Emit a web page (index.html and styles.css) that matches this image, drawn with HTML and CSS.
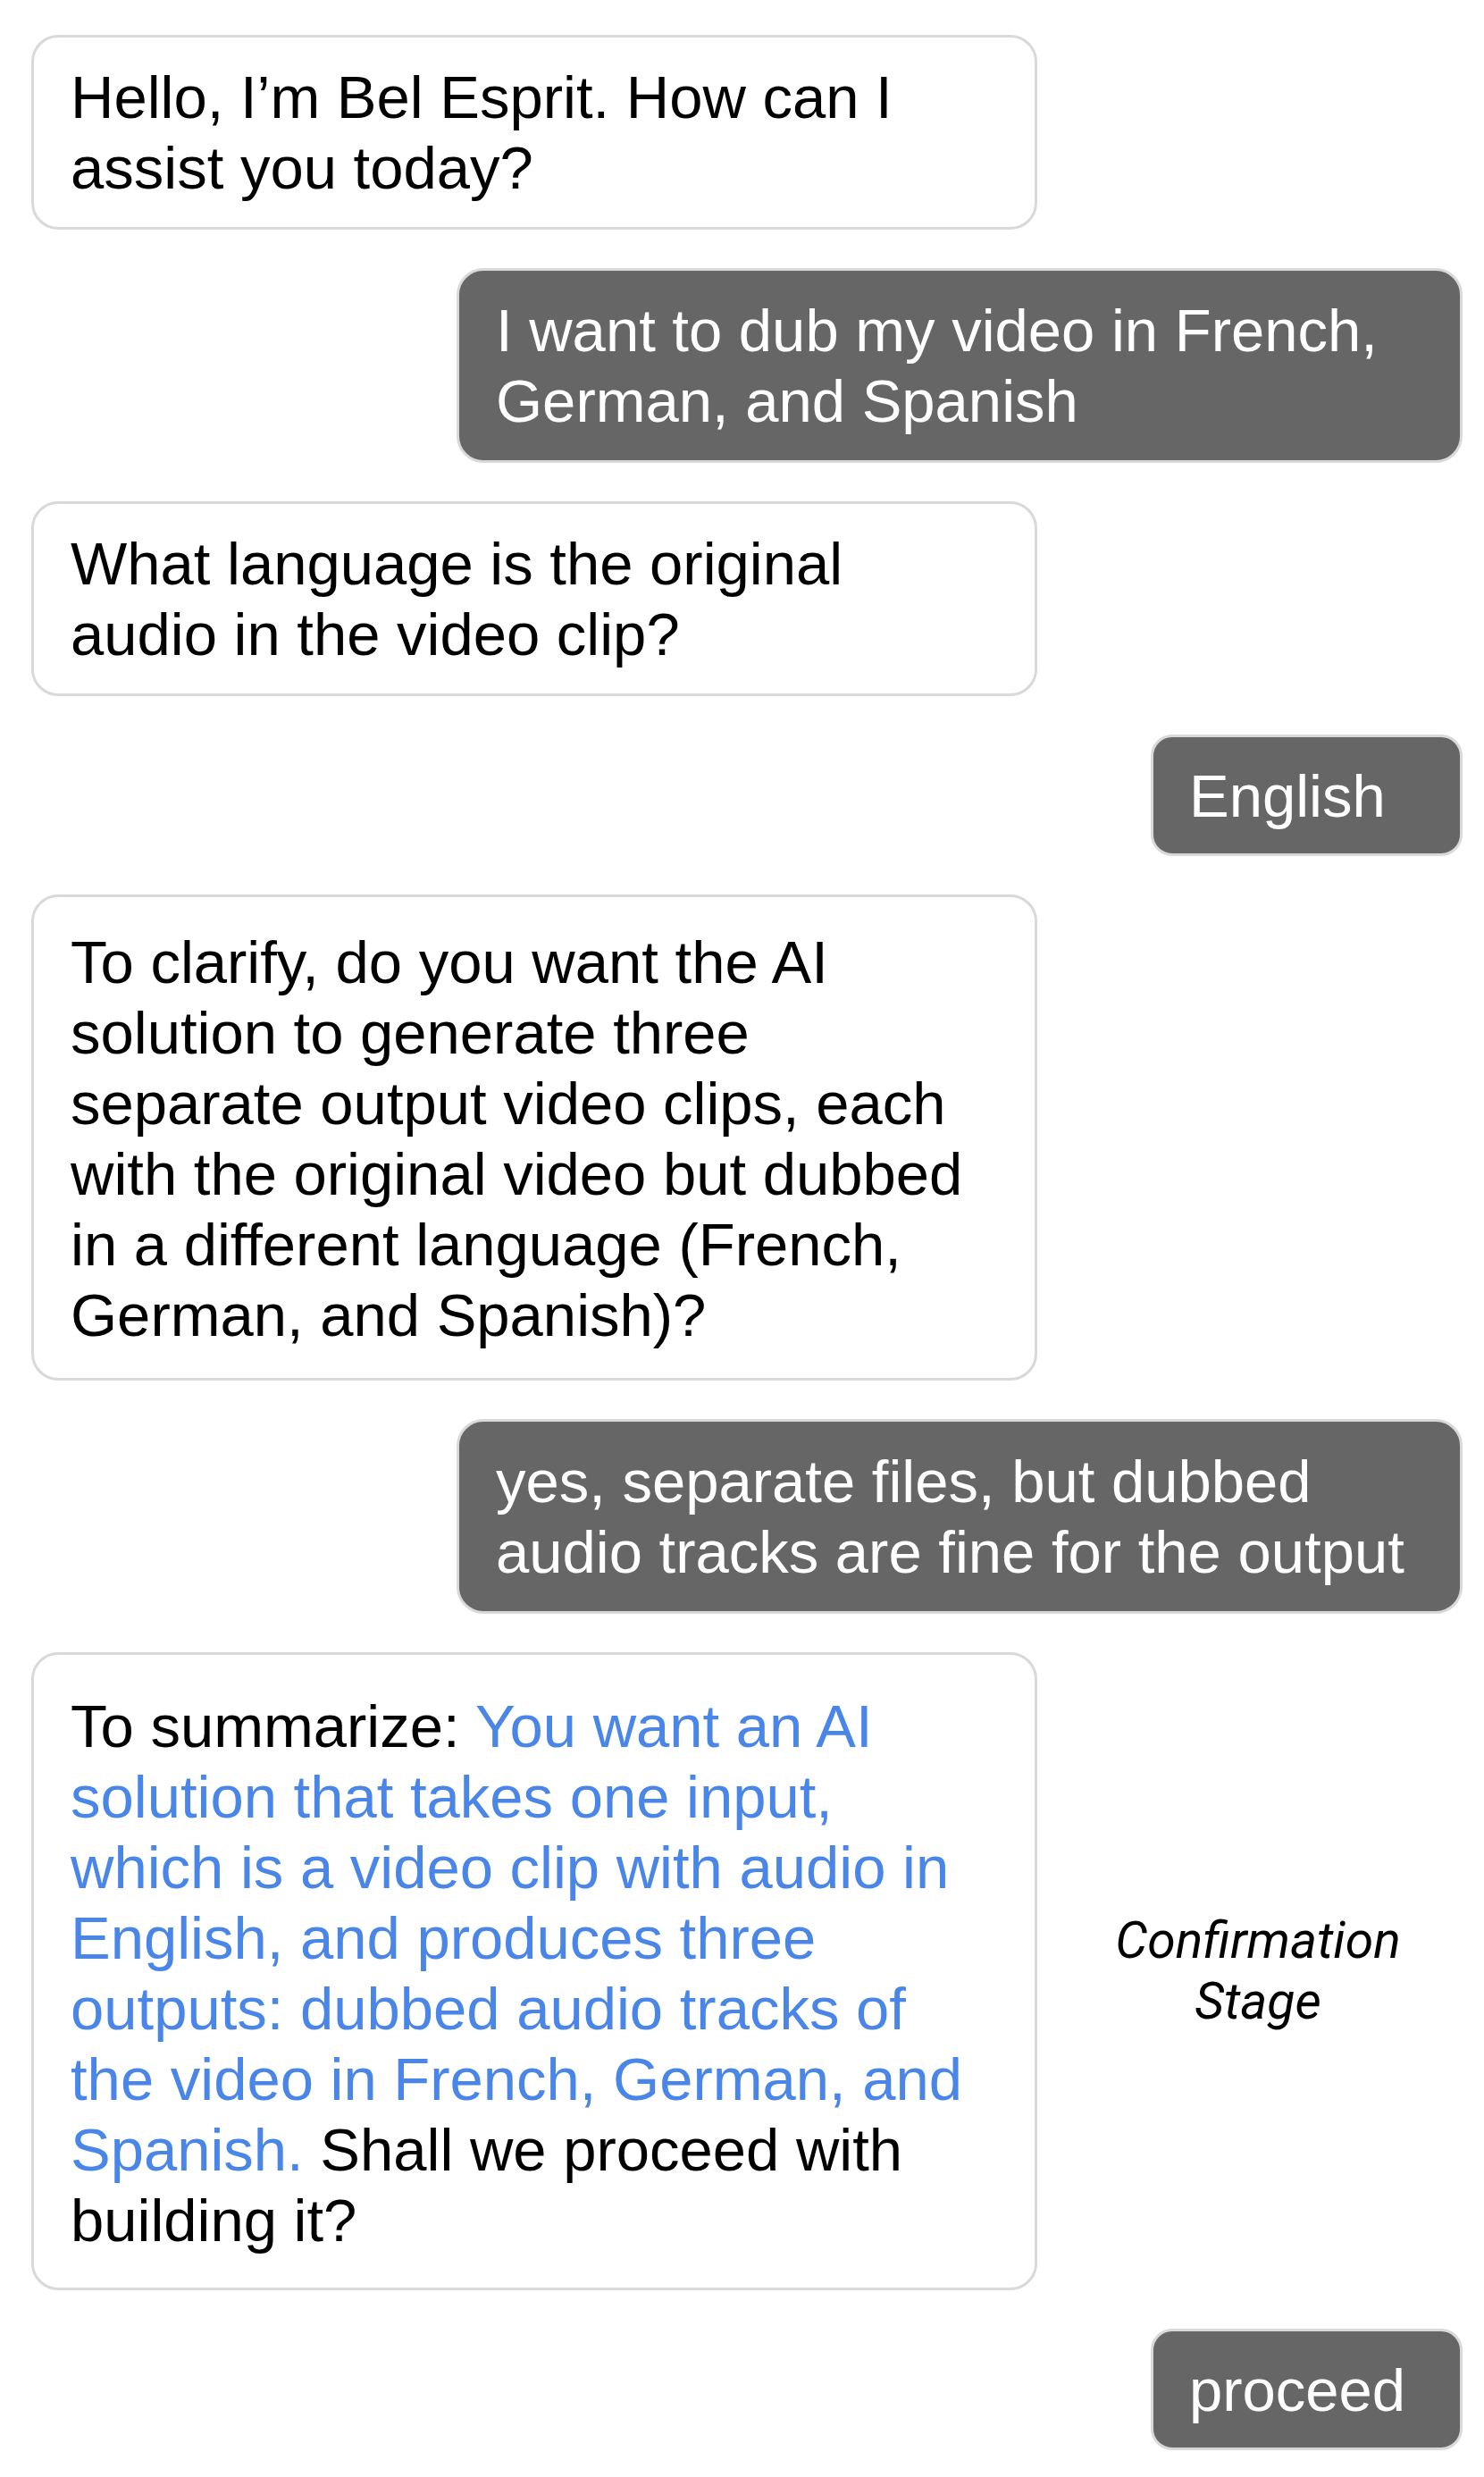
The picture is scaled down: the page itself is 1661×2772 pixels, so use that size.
FILE: index.html
```html
<!DOCTYPE html>
<html>

<head>
  <meta charset="UTF-8">
  <title>Bel Esprit</title>
  <link rel="stylesheet" href="styles.css">
</head>

<body>
  <div class="chat">
    <div class="bubble bot">
      Hello, I’m Bel Esprit. How can I<br>assist you today?
    </div>

    <div class="bubble user">
      I want to dub my video in French,<br>German, and Spanish
    </div>

    <div class="bubble bot">
      What language is the original<br>audio in the video clip?
    </div>

    <div class="bubble user short">English</div>

    <div class="bubble bot clarify">
      To clarify, do you want the AI<br>
      solution to generate three<br>
      separate output video clips, each<br>
      with the original video but dubbed<br>
      in a different language (French,<br>
      German, and Spanish)?
    </div>

    <div class="bubble user">
      yes, separate files, but dubbed<br>audio tracks are fine for the output
    </div>

    <div class="row">
      <div class="bubble bot summary">
        To summarize: <span class="highlight">You want an AI<br>
        solution that takes one input,<br>
        which is a video clip with audio in<br>
        English, and produces three<br>
        outputs: dubbed audio tracks of<br>
        the video in French, German, and<br>
        Spanish.</span> Shall we proceed with<br>
        building it?
      </div>
      <p class="stage">Confirmation<br>Stage</p>
    </div>

    <div class="bubble user short">proceed</div>
  </div>
</body>

</html>
```

FILE: styles.css
```css
body {
  margin: 0;
  background-color: #fff;
  font-family: "Liberation Sans", Arial, sans-serif;
  color: #000;
}

.chat {
  display: flex;
  flex-direction: column;
  gap: 43px;
  padding: 39px 24px 30px 35px;
}

.bubble {
  box-sizing: border-box;
  width: 1126px;
  padding: 27px 41px;
  border: 3px solid #d9d9d9;
  border-radius: 30px;
  font-size: 67px;
  line-height: 79px;
}

.bot {
  align-self: flex-start;
  background-color: #fff;
}

.user {
  align-self: flex-end;
  background-color: #666;
  color: #fff;
}

.short {
  width: 349px;
  padding: 26px 40px 25px;
  border-radius: 24px;
}

.clarify {
  padding-top: 33px;
  padding-bottom: 31px;
}

.summary {
  padding-top: 40px;
  padding-bottom: 36px;
}

.highlight {
  color: #4a86e8;
}

/* linha do resumo com o rótulo ao lado */
.row {
  display: flex;
  align-items: center;
}

.stage {
  flex: 1;
  margin: 0;
  padding-left: 18px;
  text-align: center;
  font-family: Roboto, "Liberation Sans", sans-serif;
  font-style: italic;
  font-size: 57px;
  line-height: 68px;
}
```
